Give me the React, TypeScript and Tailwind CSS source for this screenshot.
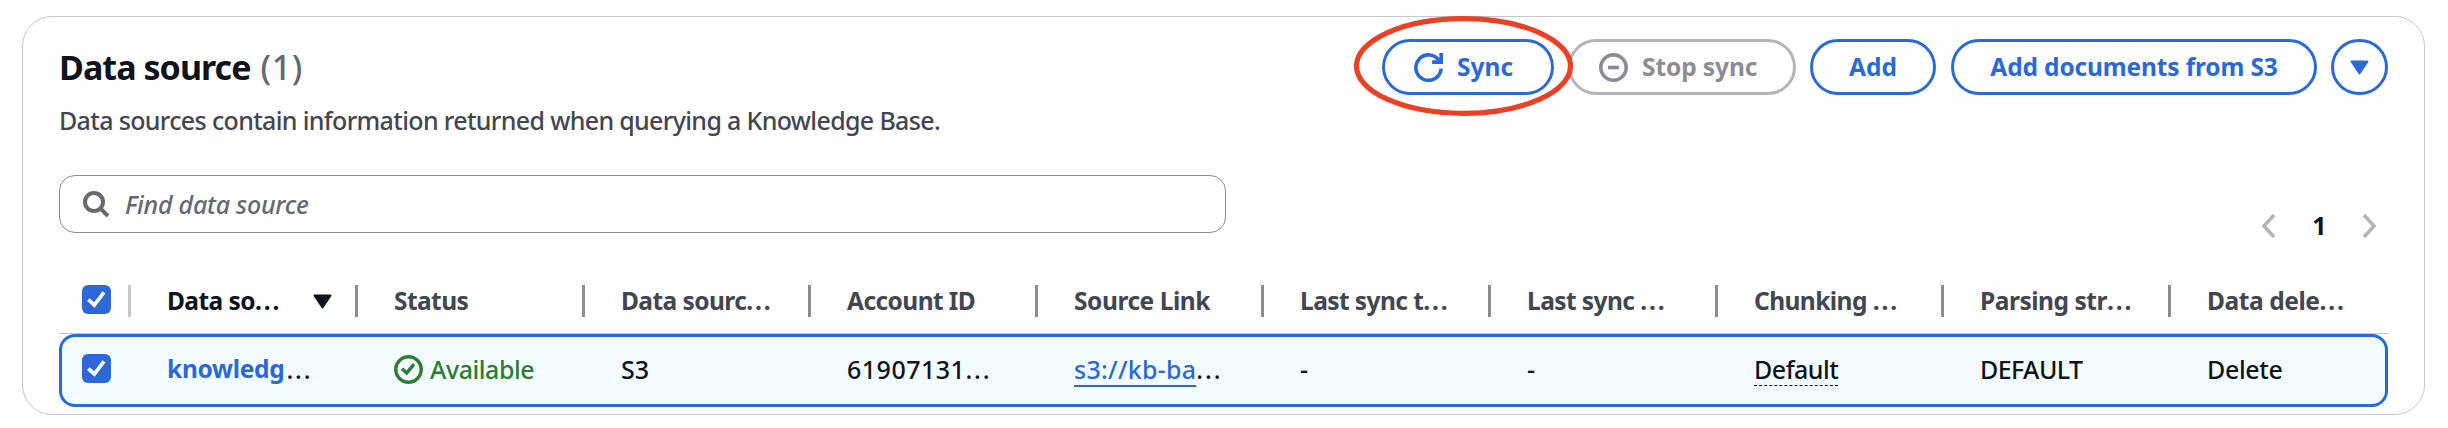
import type { ReactNode } from 'react';

const GRID = 'grid grid-cols-[72px_227px_227px_226px_227px_226px_227px_227px_226px_227px_1fr]';
const BUTTON = 'flex h-14 shrink-0 items-center rounded-full border-3 text-[24.5px] leading-10 font-bold whitespace-nowrap';

function RefreshIcon() {
  return (
    <svg className="size-[29px] shrink-0" viewBox="0 0 16 16" fill="none" stroke="currentColor" strokeWidth="2">
      <path d="M10 5h5V0" />
      <path d="M15 8.6A7 7 0 1 1 14.1 4.6" />
    </svg>
  );
}

function StopIcon() {
  return (
    <svg className="size-[29px] shrink-0" viewBox="0 0 16 16" fill="none" stroke="currentColor" strokeWidth="2">
      <circle cx="8" cy="8" r="7" />
      <path d="M5 8h6" />
    </svg>
  );
}

function SearchIcon() {
  return (
    <svg className="size-[26px] shrink-0 text-[#656871]" viewBox="0 0 26 26" fill="none" stroke="currentColor" strokeWidth="4">
      <circle cx="11" cy="11" r="9" />
      <path d="M17.5 17.5L25 25" />
    </svg>
  );
}

function Caret() {
  return (
    <svg className="h-[15px] w-[19px] shrink-0" viewBox="0 0 19 15" fill="currentColor" stroke="currentColor" strokeWidth="2" strokeLinejoin="round">
      <path d="M1.5 1.5h16l-8 12z" />
    </svg>
  );
}

function Chevron({ right = false }: { right?: boolean }) {
  return (
    <svg className="h-6 w-[15px] shrink-0 text-[#b4b4bb]" viewBox="0 0 15 24" fill="none" stroke="currentColor" strokeWidth="3.6">
      <path d={right ? 'M2 1L12 12L2 23' : 'M13 1L3 12L13 23'} />
    </svg>
  );
}

function StatusIcon() {
  return (
    <svg className="size-[29px] shrink-0" viewBox="0 0 29 29" fill="none" stroke="currentColor" strokeWidth="3.5">
      <circle cx="14.5" cy="14.5" r="12.7" />
      <path d="M8 13.8L12.7 18L20 9.2" />
    </svg>
  );
}

function Checkbox() {
  return (
    <svg className="size-[29px] shrink-0 rounded-md bg-[#2b69d9]" viewBox="0 0 29 29" fill="none" stroke="white" strokeWidth="3.7">
      <path d="M6.3 14.7L12.3 20L22 7.3" />
    </svg>
  );
}

function Dots() {
  return <span className="tracking-[1.9px]">...</span>;
}

function HeaderCell({ children, last = false, extra }: { children: ReactNode; last?: boolean; extra?: ReactNode }) {
  return (
    <div className="flex items-center pl-9">
      <span className="tracking-[-0.57px] whitespace-nowrap">{children}</span>
      <div className="ml-auto flex items-center">
        {extra}
        {!last && <span className="h-8 w-[3px] bg-[#8c8c94]" />}
      </div>
    </div>
  );
}

function Cell({ children }: { children: ReactNode }) {
  return <div className="flex items-center pb-[3px] pl-9 whitespace-nowrap">{children}</div>;
}

export default function App() {
  return (
    <div className="h-[428px] w-[2448px] overflow-hidden bg-white pt-4 pl-[22px] font-['Noto_Sans',sans-serif] text-[25px] leading-10 font-medium text-[#0f141a]">
      <section className="h-[399px] w-[2403px] rounded-[30px] border border-[#c6c6cd] px-9 pt-[22px]">
        <header className="flex items-start justify-between">
          <div className="pt-1">
            <h2 className="text-[34px] leading-[48px] font-bold tracking-[-0.95px]">
              Data source<span className="ml-2.5 font-medium tracking-[0.6px] text-[#656871]">(1)</span>
            </h2>
            <p className="mt-[9px] tracking-[-0.655px] text-[#424650]">
              Data sources contain information returned when querying a Knowledge Base.
            </p>
          </div>
          <div className="flex gap-3.5 text-[#2b69d9]">
            <button className={`${BUTTON} relative w-[172px] border-[#2b69d9] pl-[29px]`}>
              <RefreshIcon />
              <span className="ml-3.5">Sync</span>
              <svg className="absolute -top-[26px] -left-[31px] z-10 h-[100px] w-[219px] max-w-none" viewBox="0 0 219 100" fill="none">
                <ellipse cx="109.5" cy="50" rx="107" ry="47.3" stroke="#ea4025" strokeWidth="5.2" />
              </svg>
            </button>
            <button className={`${BUTTON} w-[228px] border-[#b4b4bb] pl-7 text-[#8c8c94]`}>
              <StopIcon />
              <span className="ml-3.5 tracking-[-0.1px]">Stop sync</span>
            </button>
            <button className={`${BUTTON} mr-px w-[126px] justify-center border-[#2b69d9]`}>Add</button>
            <button className={`${BUTTON} w-[366px] justify-center border-[#2b69d9] tracking-[-0.15px]`}>
              Add documents from S3
            </button>
            <button className={`${BUTTON} w-[57px] justify-center border-[#2b69d9]`}>
              <Caret />
            </button>
          </div>
        </header>

        <div className="mt-[35px] flex items-start justify-between">
          <div className="flex h-[58px] w-[1167px] items-center rounded-2xl border border-[#8c8c94] pl-[23px]">
            <SearchIcon />
            <span className="ml-4 pb-px tracking-[-0.25px] text-[#656871] italic">Find data source</span>
          </div>
          <div className="mt-[31px] flex h-10 items-center pr-[11px]">
            <Chevron />
            <span className="ml-9 w-[15px] pb-0.5 text-center font-bold">1</span>
            <span className="ml-[35px] flex">
              <Chevron right />
            </span>
          </div>
        </div>

        <div className={`${GRID} mt-[23px] h-[65px] border-b border-[#c6c6cd] text-[24.5px] font-bold text-[#424650]`}>
          <div className="flex items-center justify-between pl-[23px]">
            <span className="flex pb-[3px]">
              <Checkbox />
            </span>
            <span className="h-8 w-[3px] bg-[#c6c6cd]" />
          </div>
          <HeaderCell
            extra={
              <span className="mr-[23px] flex text-[#0f141a]">
                <Caret />
              </span>
            }
          >
            <span className="text-[#0f141a]">Data so<Dots /></span>
          </HeaderCell>
          <HeaderCell>Status</HeaderCell>
          <HeaderCell>Data sourc<Dots /></HeaderCell>
          <HeaderCell>Account ID</HeaderCell>
          <HeaderCell><span className="tracking-[-0.45px]">Source Link</span></HeaderCell>
          <HeaderCell>Last sync t<Dots /></HeaderCell>
          <HeaderCell>Last sync <Dots /></HeaderCell>
          <HeaderCell>Chunking <Dots /></HeaderCell>
          <HeaderCell><span className="tracking-[-0.47px]">Parsing str<Dots /></span></HeaderCell>
          <HeaderCell last><span className="tracking-[-0.43px]">Data dele<Dots /></span></HeaderCell>
        </div>

        <div className={`${GRID} h-[73px] rounded-2xl bg-[#f2fcff] inset-ring-3 inset-ring-[#2b69d9]`}>
          <div className="flex items-center pb-1 pl-[23px]">
            <Checkbox />
          </div>
          <Cell>
            <span className="text-[24.5px] font-bold tracking-[-0.3px] text-[#2b69d9]">knowledg</span>
            <span className="ml-0.5"><Dots /></span>
          </Cell>
          <Cell>
            <span className="flex items-center text-[#2f7d32]">
              <StatusIcon />
              <span className="ml-[7px] tracking-[-0.45px]">Available</span>
            </span>
          </Cell>
          <Cell>S3</Cell>
          <Cell>
            <span className="tracking-[0.5px]">61907131</span>
            <Dots />
          </Cell>
          <Cell>
            <span className="tracking-[0.25px] text-[#2b69d9] underline decoration-2 underline-offset-[6px]">s3://kb-ba</span>
            <Dots />
          </Cell>
          <Cell>-</Cell>
          <Cell>-</Cell>
          <Cell>
            <span className="tracking-[-0.5px] underline decoration-dashed decoration-1 underline-offset-[6px]">Default</span>
          </Cell>
          <Cell><span className="tracking-[-0.6px]">DEFAULT</span></Cell>
          <Cell><span className="tracking-[-0.35px]">Delete</span></Cell>
        </div>
      </section>
    </div>
  );
}
